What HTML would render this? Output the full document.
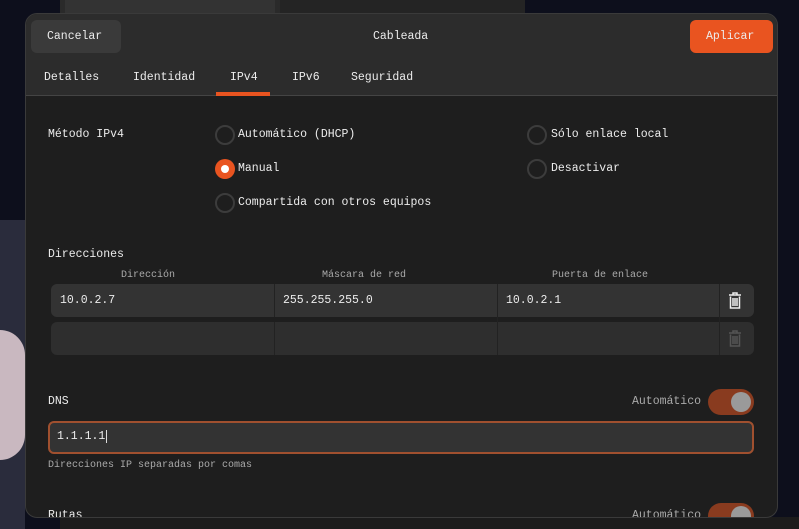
<!DOCTYPE html><html><head><style>
*{box-sizing:border-box;margin:0;padding:0}
body{width:799px;height:529px;overflow:hidden;background:#0d0f1c;font-family:"Liberation Mono",monospace;color:#ececec;position:relative;font-size:11.5px}
.a{position:absolute}
.t{position:absolute;white-space:nowrap;font-size:11.5px;line-height:14px}
.rad{position:absolute;width:20px;height:20px;border-radius:50%;border:2px solid #3c3c3c}
.sel{background:#e95420;border:none}
.sel:after{content:"";position:absolute;left:6px;top:6px;width:8px;height:8px;border-radius:50%;background:#fff}
.small{font-size:10px;color:#aaa;position:absolute;white-space:nowrap}
</style></head><body>
<div class="a" style="left:60px;top:0;width:220px;height:30px;background:#2a2a2a"></div>
<div class="a" style="left:65px;top:0;width:210px;height:14px;background:#333"></div>
<div class="a" style="left:280px;top:0;width:245px;height:14px;background:#242424"></div>
<div class="a" style="left:0;top:220px;width:25px;height:309px;background:#2a2c3c"></div>
<div class="a" style="left:0;top:330px;width:25px;height:130px;background:#c9b8c0;border-radius:0 40px 40px 0"></div>
<div class="a" style="left:60px;top:517px;width:740px;height:12px;background:#1c1c1c"></div>
<div class="a" style="left:25px;top:13px;width:753px;height:505px;background:#1e1e1e;border-radius:12px;overflow:hidden;border:1px solid #3a3a3a">
 <div class="a" style="left:0;top:0;width:753px;height:82px;background:#2c2c2c;border-bottom:1px solid #444"></div>
 <div class="a" style="left:5px;top:6px;width:90px;height:33px;background:#3a3a3a;border-radius:6px"></div>
 <div class="t" style="left:21px;top:16px">Cancelar</div>
 <div class="t" style="left:347px;top:16px">Cableada</div>
 <div class="a" style="left:664px;top:6px;width:83px;height:33px;background:#e95420;border-radius:6px"></div>
 <div class="t" style="left:680px;top:16px">Aplicar</div>
 <div class="t" style="left:18px;top:57px">Detalles</div>
 <div class="t" style="left:107px;top:57px">Identidad</div>
 <div class="t" style="left:204px;top:57px">IPv4</div>
 <div class="a" style="left:190px;top:78px;width:54px;height:4px;background:#e95420"></div>
 <div class="t" style="left:266px;top:57px">IPv6</div>
 <div class="t" style="left:325px;top:57px">Seguridad</div>
 <div class="t" style="left:22px;top:114px">Método IPv4</div>
 <div class="rad" style="left:189px;top:111px"></div><div class="t" style="left:212px;top:114px">Automático (DHCP)</div>
 <div class="rad sel" style="left:189px;top:145px"></div><div class="t" style="left:212px;top:148px">Manual</div>
 <div class="rad" style="left:189px;top:179px"></div><div class="t" style="left:212px;top:182px">Compartida con otros equipos</div>
 <div class="rad" style="left:501px;top:111px"></div><div class="t" style="left:525px;top:114px">Sólo enlace local</div>
 <div class="rad" style="left:501px;top:145px"></div><div class="t" style="left:525px;top:148px">Desactivar</div>
 <div class="t" style="left:22px;top:234px">Direcciones</div>
 <div class="small" style="left:95px;top:256px">Dirección</div>
 <div class="small" style="left:296px;top:256px">Máscara de red</div>
 <div class="small" style="left:526px;top:256px">Puerta de enlace</div>
 <div class="a" style="left:25px;top:270px;width:703px;height:33px;background:#333;border-radius:6px"></div>
 <div class="a" style="left:25px;top:308px;width:703px;height:33px;background:#2e2e2e;border-radius:6px"></div>
 <div class="a" style="left:248px;top:270px;width:1px;height:71px;background:#222"></div>
 <div class="a" style="left:248px;top:303px;width:480px;height:5px;background:#1e1e1e"></div>
 <div class="a" style="left:471px;top:270px;width:1px;height:71px;background:#222"></div>
 <div class="a" style="left:693px;top:270px;width:1px;height:71px;background:#222"></div>
 <div class="t" style="left:34px;top:280px">10.0.2.7</div>
 <div class="t" style="left:257px;top:280px">255.255.255.0</div>
 <div class="t" style="left:480px;top:280px">10.0.2.1</div>
 <svg class="a" style="left:702px;top:278px" width="14" height="18" viewBox="0 0 14 18"><path d="M1 3h12M5 3V1h4v2M2.5 4.5v11.5h9V4.5M5 6v8M7 6v8M9 6v8" stroke="#eee" stroke-width="1.5" fill="none"/></svg>
 <svg class="a" style="left:702px;top:316px" width="14" height="18" viewBox="0 0 14 18"><path d="M1 3h12M5 3V1h4v2M2.5 4.5v11.5h9V4.5M5 6v8M7 6v8M9 6v8" stroke="#555" stroke-width="1.5" fill="none"/></svg>
 <div class="t" style="left:22px;top:381px">DNS</div>
 <div class="t" style="left:606px;top:381px;color:#aaa">Automático</div>
 <div class="a" style="left:682px;top:375px;width:46px;height:26px;border-radius:13px;background:#893b1f"></div>
 <div class="a" style="left:705px;top:378px;width:20px;height:20px;border-radius:50%;background:#9a9a9a"></div>
 <div class="a" style="left:22px;top:407px;width:706px;height:33px;background:#333;border:2px solid #a0502f;border-radius:6px"></div>
 <div class="t" style="left:31px;top:416px">1.1.1.1<span style="border-left:1px solid #ddd;margin-left:1px"></span></div>
 <div class="small" style="left:22px;top:446px">Direcciones IP separadas por comas</div>
 <div class="t" style="left:22px;top:495px">Rutas</div>
 <div class="t" style="left:606px;top:495px;color:#aaa">Automático</div>
 <div class="a" style="left:682px;top:489px;width:46px;height:26px;border-radius:13px;background:#893b1f"></div>
 <div class="a" style="left:705px;top:492px;width:20px;height:20px;border-radius:50%;background:#9a9a9a"></div>
</div>
</body></html>
